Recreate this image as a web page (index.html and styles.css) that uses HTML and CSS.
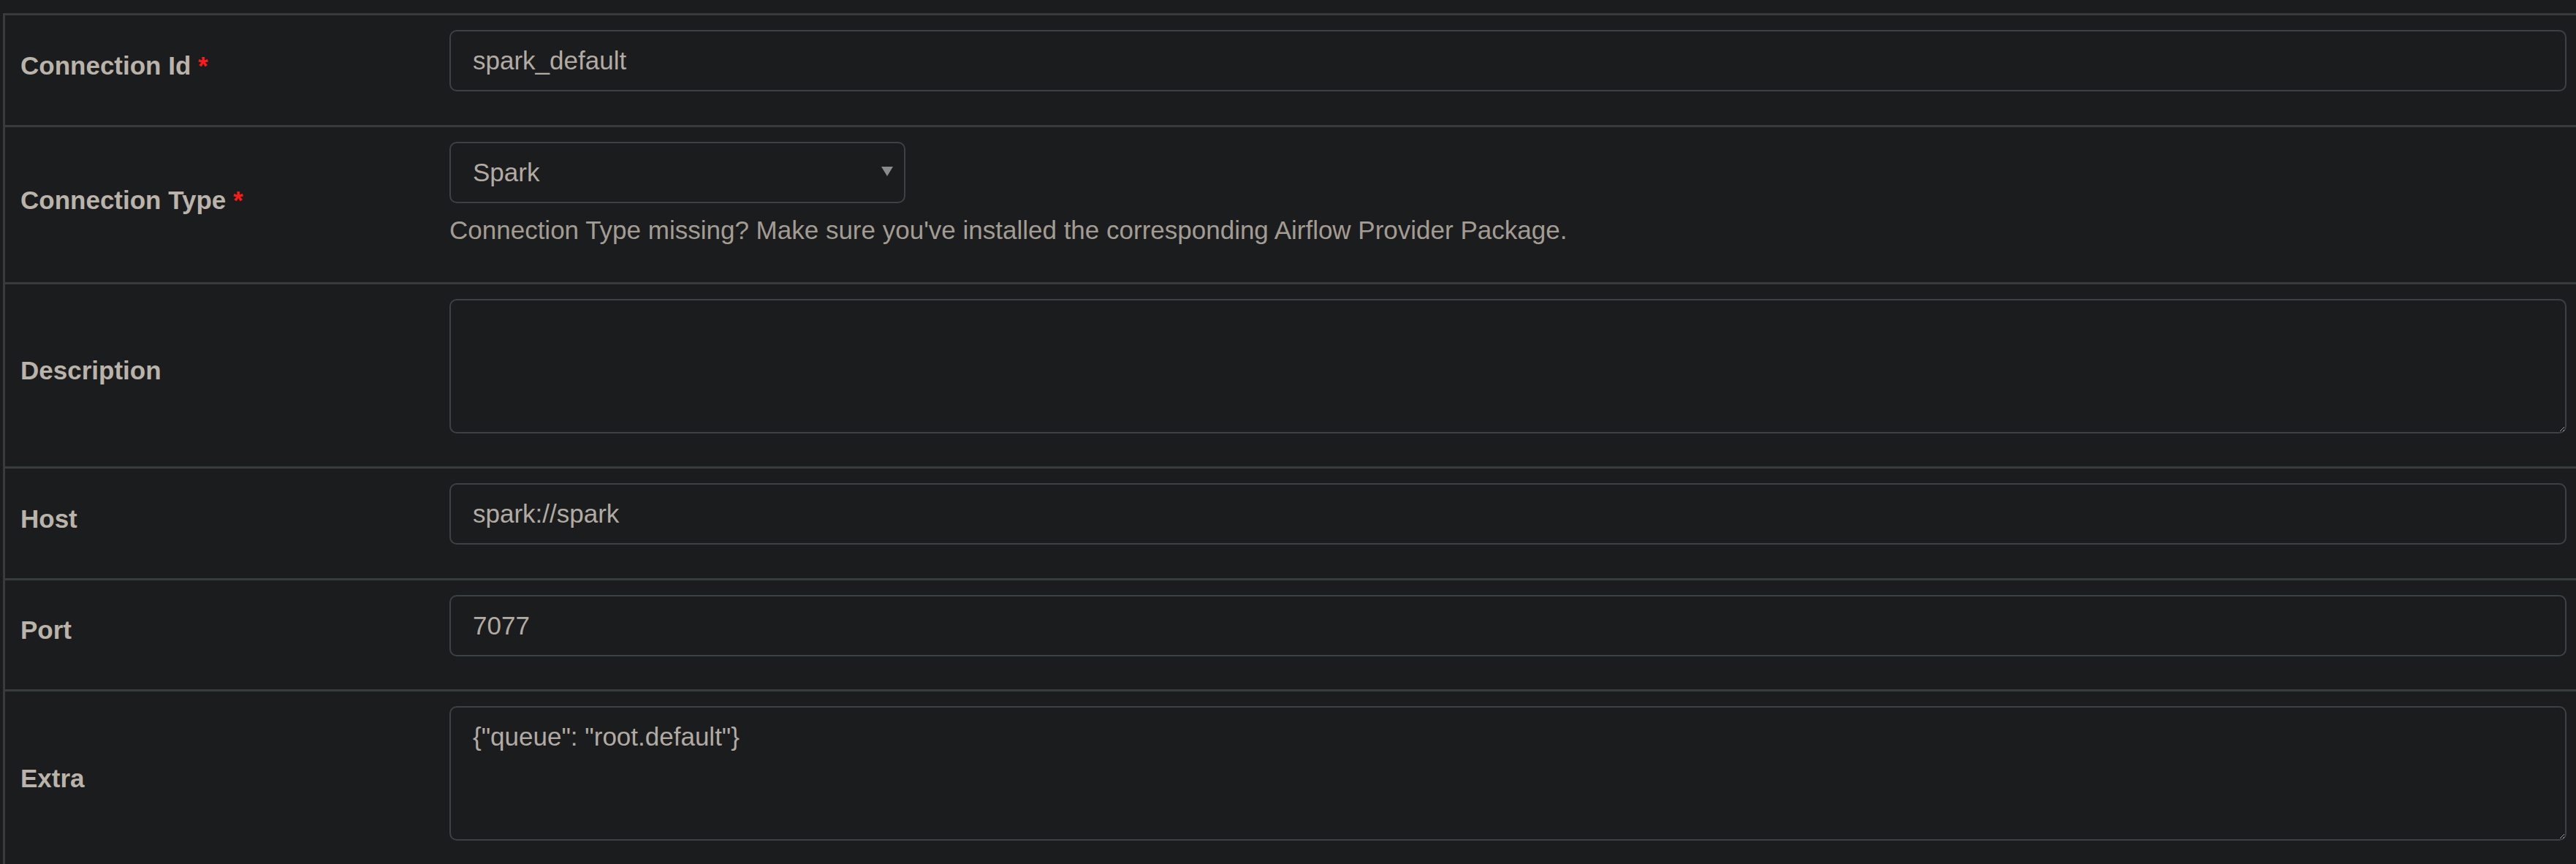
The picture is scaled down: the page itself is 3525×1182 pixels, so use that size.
FILE: index.html
```html
<!DOCTYPE html>
<html lang="en">
<head>
<meta charset="utf-8">
<title>Edit Connection</title>
<link rel="stylesheet" href="styles.css">
</head>
<body>
<div class="page">
  <form class="conn-form">
    <div class="row">
      <div class="label-cell"><label class="lbl" for="conn_id">Connection Id <span class="req">*</span></label></div>
      <div class="field-cell">
        <input class="ctl" id="conn_id" type="text" value="spark_default">
      </div>
    </div>
    <div class="row">
      <div class="label-cell"><label class="lbl" for="conn_type">Connection Type <span class="req">*</span></label></div>
      <div class="field-cell">
        <div class="select-wrap">
          <select class="ctl sel" id="conn_type">
            <option>Spark</option>
          </select>
          <svg class="caret" width="16" height="13" viewBox="0 0 16 13"><path d="M0 0 H16 L8 13 Z" fill="#8b8b8b"/></svg>
        </div>
        <p class="help">Connection Type missing? Make sure you've installed the corresponding Airflow Provider Package.</p>
      </div>
    </div>
    <div class="row">
      <div class="label-cell"><label class="lbl" for="description">Description</label></div>
      <div class="field-cell">
        <textarea class="ctl area" id="description"></textarea>
      </div>
    </div>
    <div class="row">
      <div class="label-cell"><label class="lbl" for="host">Host</label></div>
      <div class="field-cell">
        <input class="ctl" id="host" type="text" value="spark://spark">
      </div>
    </div>
    <div class="row">
      <div class="label-cell"><label class="lbl" for="port">Port</label></div>
      <div class="field-cell">
        <input class="ctl" id="port" type="text" value="7077">
      </div>
    </div>
    <div class="row">
      <div class="label-cell"><label class="lbl" for="extra">Extra</label></div>
      <div class="field-cell">
        <textarea class="ctl area" id="extra">{"queue": "root.default"}</textarea>
      </div>
    </div>
  </form>
</div>
</body>
</html>
```
FILE: styles.css
```css
html, body {
  margin: 0;
  padding: 0;
  background: #1b1c1e;
}

body {
  font-family: "Liberation Sans", Arial, sans-serif;
  font-size: 35px;
  color: #b8b1a8;
  overflow: hidden;
}

.page {
  padding: 18px 0 0 4px;
}

.conn-form {
  border-top: 3px solid #373d3d;
  border-left: 3px solid #373d3d;
}

.row {
  display: grid;
  grid-template-columns: 588px 1fr;
  border-bottom: 3px solid #373d3d;
}

.label-cell {
  display: flex;
  align-items: center;
  padding: 20px 20px 20px 21px;
}

.lbl {
  font-weight: bold;
  color: #bab3aa;
  margin-bottom: 12px;
  line-height: 50px;
}

.req {
  color: #ff1a1a;
}

.field-cell {
  padding: 20px 13px 20px 20px;
}

.ctl {
  display: block;
  box-sizing: border-box;
  width: 100%;
  height: 84px;
  margin: 0 0 25.5px 0;
  padding: 15px 30px;
  border: 2px solid #3c4244;
  border-radius: 10px;
  background: #1b1c1e;
  color: #b1aba3;
  font-family: "Liberation Sans", Arial, sans-serif;
  font-size: 35px;
  line-height: 50px;
  outline: none;
}

.select-wrap {
  position: relative;
  width: 624px;
}

.sel {
  appearance: none;
  -webkit-appearance: none;
  margin-bottom: 0;
}

.caret {
  position: absolute;
  top: 34px;
  right: 17px;
  pointer-events: none;
}

.help {
  margin: 12.5px 0 25.5px 0;
  line-height: 50px;
  color: #a39c92;
}

.area {
  height: 184px;
  resize: both;
}
```
